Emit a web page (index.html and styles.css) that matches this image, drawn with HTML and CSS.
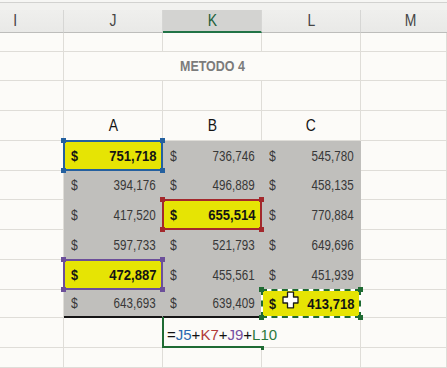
FILE: index.html
```html
<!DOCTYPE html>
<html>
<head>
<meta charset="utf-8">
<link rel="stylesheet" href="styles.css">
</head>
<body>
<div class="sheet">
  <div class="top"></div>

  <div class="h hi"><span class="sq">I</span></div>
  <div class="h"><span class="sq">J</span></div>
  <div class="h hsel"><span class="sq">K</span></div>
  <div class="h"><span class="sq">L</span></div>
  <div class="h hm"><span class="sq">M</span></div>

  <div class="c"></div><div class="c"></div><div class="c"></div><div class="c"></div><div class="c"></div>

  <div class="c"></div>
  <div class="c title"><span class="sq">METODO 4</span></div>
  <div class="c"></div>

  <div class="c"></div><div class="c"></div><div class="c"></div><div class="c"></div><div class="c"></div>

  <div class="c"></div>
  <div class="c lbl"><span class="sq">A</span></div>
  <div class="c lbl"><span class="sq">B</span></div>
  <div class="c lbl"><span class="sq">C</span></div>
  <div class="c"></div>

  <div class="c"></div>
  <div class="c g hl blue"><span class="d">$</span><span class="n">751,718</span><i class="k tl"></i><i class="k tr"></i><i class="k bl"></i><i class="k br"></i></div>
  <div class="c g"><span class="d">$</span><span class="n">736,746</span></div>
  <div class="c g"><span class="d">$</span><span class="n">545,780</span></div>
  <div class="c"></div>

  <div class="c"></div>
  <div class="c g"><span class="d">$</span><span class="n">394,176</span></div>
  <div class="c g"><span class="d">$</span><span class="n">496,889</span></div>
  <div class="c g"><span class="d">$</span><span class="n">458,135</span></div>
  <div class="c"></div>

  <div class="c"></div>
  <div class="c g"><span class="d">$</span><span class="n">417,520</span></div>
  <div class="c g hl red"><span class="d">$</span><span class="n">655,514</span><i class="k tl"></i><i class="k tr"></i><i class="k bl"></i><i class="k br"></i></div>
  <div class="c g"><span class="d">$</span><span class="n">770,884</span></div>
  <div class="c"></div>

  <div class="c"></div>
  <div class="c g"><span class="d">$</span><span class="n">597,733</span></div>
  <div class="c g"><span class="d">$</span><span class="n">521,793</span></div>
  <div class="c g"><span class="d">$</span><span class="n">649,696</span></div>
  <div class="c"></div>

  <div class="c"></div>
  <div class="c g hl purple"><span class="d">$</span><span class="n">472,887</span><i class="k tl"></i><i class="k tr"></i><i class="k bl"></i><i class="k br"></i></div>
  <div class="c g"><span class="d">$</span><span class="n">455,561</span></div>
  <div class="c g"><span class="d">$</span><span class="n">451,939</span></div>
  <div class="c"></div>

  <div class="c"></div>
  <div class="c g last"><span class="d">$</span><span class="n">643,693</span></div>
  <div class="c g last"><span class="d">$</span><span class="n">639,409</span></div>
  <div class="c g hl green ants"><span class="d">$</span><svg class="cross" width="17" height="18" viewBox="0 0 17 18"><path d="M5.5 1.2 H11.5 V6 H16 V12 H11.5 V16.8 H5.5 V12 H1 V6 H5.5 Z" fill="#ffffff" stroke="#1a1a1a" stroke-width="1.3" stroke-linejoin="round"/></svg><span class="n">413,718</span><i class="k tl"></i><i class="k tr"></i><i class="k bl"></i><i class="k br"></i></div>
  <div class="c"></div>

  <div class="c"></div>
  <div class="c"></div>
  <div class="c edit"><span class="f">=<b class="rb">J5</b>+<b class="rr">K7</b>+<b class="rp">J9</b>+<b class="rg">L10</b></span><span class="caret"></span><i class="k ebr"></i></div>
  <div class="c"></div>
  <div class="c"></div>

  <div class="c"></div><div class="c"></div><div class="c"></div><div class="c"></div><div class="c"></div>
</div>
</body>
</html>
```

FILE: styles.css
```css
* { box-sizing: border-box; margin: 0; padding: 0; }

body {
  width: 447px;
  height: 368px;
  overflow: hidden;
  background: #fcfbf8;
  font-family: "Liberation Sans", Arial, sans-serif;
}

.sheet {
  display: grid;
  grid-template-columns: 64px 99px 99px 99px 86px;
  grid-template-rows: 10px 23px 19px 29px 30px 30px 30px 29px 30px 30px 30px 28px 30px 20px;
  width: 447px;
}

.top {
  grid-column: span 5;
  background: linear-gradient(#f6f6f4 0 2px, #d2d2d0 2px 3px, #f1f1ef 3px);
}

.h {
  background: linear-gradient(#efefed, #e9e9e7);
  border-right: 1px solid #d6d6d4;
  border-bottom: 1px solid #bdbdbb;
  display: flex;
  align-items: center;
  justify-content: center;
  font-size: 16px;
  color: #454545;
}
.hi { justify-content: flex-start; padding-left: 13px; }
.hm { justify-content: flex-start; padding-left: 43px; border-right: none; }
.hsel {
  background: #d3d3d1;
  border-bottom: 2px solid #217346;
  color: #215f3a;
  padding-top: 1px;
}

.sq { display: inline-block; transform: scaleX(.87); }

.c {
  position: relative;
  border-right: 1px solid #dfddd8;
  border-bottom: 1px solid #dfddd8;
}

.title {
  grid-column: span 3;
  display: flex;
  align-items: center;
  justify-content: center;
  font-size: 14px;
  font-weight: bold;
  color: #7b7b7b;
}
.title .sq { transform: scaleX(.89); }

.lbl {
  display: flex;
  align-items: center;
  justify-content: center;
  font-size: 16px;
  color: #141414;
}

.g {
  background: #c0bfbc;
  border-color: #c0bfbc;
  display: flex;
  align-items: center;
  justify-content: space-between;
  padding: 0 6px 0 7px;
  font-size: 14px;
  color: #383838;
}
.g .d, .g .n { display: inline-block; }
.g .d { transform: scaleX(.87); transform-origin: left center; }
.g .n { transform: scaleX(.83); transform-origin: right center; }
.last { border-bottom: 2px solid #151515; }

.hl {
  background: #e6e404;
  border-color: #e6e404;
  z-index: 2;
  font-weight: bold;
  font-size: 14.5px;
  color: #141414;
}
.hl .n { transform: scaleX(.9); }
.hl::after {
  content: "";
  position: absolute;
  left: -1px; top: -1px; right: -1px; bottom: -1px;
  border: 2px solid var(--bc);
}
.blue { --bc: #24609f; }
.red { --bc: #a3282c; }
.purple { --bc: #6c4f9a; }
.green { --bc: #1f6b33; }

.ants::before {
  content: "";
  position: absolute;
  left: -1px; top: -1px; right: -1px; bottom: -1px;
  border: 2px solid #ffffff;
  z-index: 1;
}
.ants::after { border-style: dashed; z-index: 1; }

.k {
  position: absolute;
  width: 5px;
  height: 5px;
  background: var(--bc);
  z-index: 3;
}
.tl { left: -3px; top: -3px; }
.tr { right: -3px; top: -3px; }
.bl { left: -3px; bottom: -3px; }
.br { right: -3px; bottom: -3px; }

.cross {
  position: absolute;
  left: 20px;
  top: 1px;
  z-index: 4;
}

.edit {
  z-index: 3;
  border-right-color: transparent;
  display: flex;
  align-items: center;
  padding: 3px 0 0 4px;
  white-space: nowrap;
  font-size: 15px;
  color: #111;
  --bc: #1f6b33;
}
.edit::after {
  content: "";
  position: absolute;
  left: -1px; top: -1px; right: -1px; bottom: -1px;
  border-left: 2px solid #1f6b33;
  border-bottom: 2px solid #1f6b33;
}
.f b { font-weight: normal; }
.rb { color: #2a69b0; }
.rr { color: #b03a38; }
.rp { color: #7650a2; }
.rg { color: #2b7a3c; }
.caret {
  display: inline-block;
  width: 1px;
  height: 18px;
  margin-left: 1px;
  margin-top: -2px;
  background: #222;
}
.ebr { right: -3px; bottom: -3px; width: 3px; height: 4px; }
```
